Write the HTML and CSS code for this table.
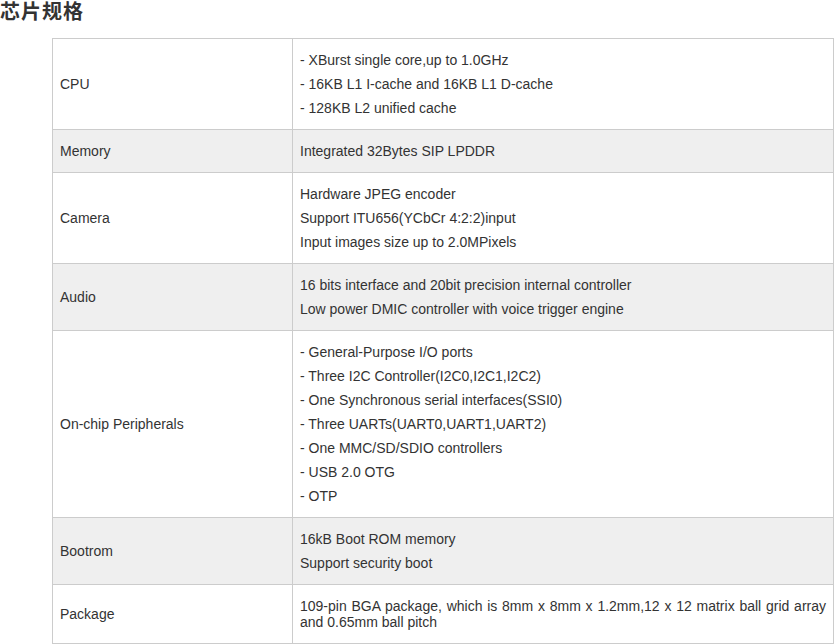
FILE: index.html
```html
<!DOCTYPE html>
<html lang="zh">
<head>
<meta charset="utf-8">
<title>芯片规格</title>
<link rel="stylesheet" href="styles.css">
</head>
<body>
<h2 class="title">芯片规格</h2>
<table class="spec">
  <tr>
    <td class="name">CPU</td>
    <td class="val">
      <p>- XBurst single core,up to 1.0GHz</p>
      <p>- 16KB L1 I-cache and 16KB L1 D-cache</p>
      <p>- 128KB L2 unified cache</p>
    </td>
  </tr>
  <tr class="alt">
    <td class="name">Memory</td>
    <td class="val"><p>Integrated 32Bytes SIP LPDDR</p></td>
  </tr>
  <tr>
    <td class="name">Camera</td>
    <td class="val">
      <p>Hardware JPEG encoder</p>
      <p>Support ITU656(YCbCr 4:2:2)input</p>
      <p>Input images size up to 2.0MPixels</p>
    </td>
  </tr>
  <tr class="alt">
    <td class="name">Audio</td>
    <td class="val">
      <p>16 bits interface and 20bit precision internal controller</p>
      <p>Low power DMIC controller with voice trigger engine</p>
    </td>
  </tr>
  <tr>
    <td class="name">On-chip Peripherals</td>
    <td class="val">
      <p>- General-Purpose I/O ports</p>
      <p>- Three I2C Controller(I2C0,I2C1,I2C2)</p>
      <p>- One Synchronous serial interfaces(SSI0)</p>
      <p>- Three UARTs(UART0,UART1,UART2)</p>
      <p>- One MMC/SD/SDIO controllers</p>
      <p>- USB 2.0 OTG</p>
      <p>- OTP</p>
    </td>
  </tr>
  <tr class="alt">
    <td class="name">Bootrom</td>
    <td class="val">
      <p>16kB Boot ROM memory</p>
      <p>Support security boot</p>
    </td>
  </tr>
  <tr>
    <td class="name">Package</td>
    <td class="val"><p class="just">109-pin BGA package, which is 8mm x 8mm x 1.2mm,12 x 12 matrix ball grid array and 0.65mm ball pitch</p></td>
  </tr>
</table>
</body>
</html>
```

FILE: styles.css
```css
html, body {
  margin: 0;
  padding: 0;
  background: #fff;
}
body {
  font-family: "Liberation Sans", Arial, sans-serif;
  font-size: 14px;
  color: #333;
}
.title {
  margin: 0;
  font-family: "Noto Sans CJK SC", sans-serif;
  font-size: 20px;
  font-weight: bold;
  line-height: 22px;
  letter-spacing: 1px;
  color: #333;
}
.spec {
  margin: 16px 0 0 52px;
  width: 782px;
  border-collapse: collapse;
}
.spec td {
  border: 1px solid #ccc;
  padding: 5px 7px;
  line-height: 16px;
  vertical-align: middle;
}
.spec .name {
  width: 225px;
}
.spec .alt td {
  background: #efefef;
}
.spec p {
  margin: 8px 0;
}
.spec .just {
  text-align: justify;
}
```
